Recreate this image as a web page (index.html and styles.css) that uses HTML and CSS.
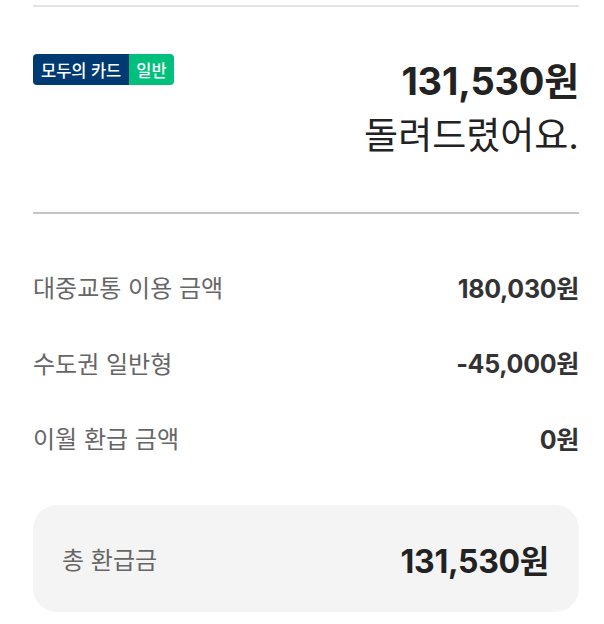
FILE: index.html
```html
<!DOCTYPE html>
<html lang="ko">
<head>
<meta charset="utf-8">
<link rel="stylesheet" href="styles.css">
</head>
<body>
<main class="page">
  <hr class="rule rule-top">
  <section class="summary">
    <div class="badge"><span class="badge-name">모두의 카드</span><span class="badge-type">일반</span></div>
    <div class="summary-text">
      <div class="summary-amount">131,530원</div>
      <div class="summary-msg">돌려드렸어요.</div>
    </div>
  </section>
  <hr class="rule rule-mid">
  <section class="rows">
    <div class="row"><span class="row-label">대중교통 이용 금액</span><span class="row-value">180,030원</span></div>
    <div class="row"><span class="row-label">수도권 일반형</span><span class="row-value">-45,000원</span></div>
    <div class="row"><span class="row-label">이월 환급 금액</span><span class="row-value">0원</span></div>
  </section>
  <section class="total">
    <span class="total-label">총 환급금</span>
    <span class="total-value">131,530원</span>
  </section>
</main>
</body>
</html>
```
FILE: styles.css
```css
* { box-sizing: border-box; }
html, body { margin: 0; background: #fff; }
body {
  font-family: "Inter", "Noto Sans CJK KR", sans-serif;
  color: #222;
}
.page {
  padding: 5px 25px 0 33px;
}
.rule {
  margin: 0;
  border: 0;
  height: 2px;
}
.rule-top { background: #e2e2e2; }
.rule-mid { background: #c4c4c4; }
.summary {
  display: flex;
  justify-content: space-between;
  align-items: flex-start;
  padding: 46px 0 52px;
}
.badge {
  display: flex;
  border-radius: 4px;
  overflow: hidden;
  height: 31px;
  font-size: 16.5px;
  font-weight: 500;
  color: #fff;
  margin-top: 1px;
}
.badge-name {
  background: #003a72;
  padding: 0 8px;
  display: flex;
  align-items: center;
}
.badge-type {
  background: #00c07c;
  padding: 0 7px;
  display: flex;
  align-items: center;
}
.summary-text {
  text-align: right;
  padding-top: 5px;
}
.summary-amount {
  font-size: 38px;
  font-weight: 700;
  line-height: 46px;
  color: #222;
  letter-spacing: -0.2px;
}
.summary-msg {
  font-size: 37px;
  font-weight: 400;
  line-height: 48px;
  color: #222;
  margin-top: 8px;
}
.rows {
  display: flex;
  flex-direction: column;
  padding-top: 55px;
  gap: 40.5px;
}
.row {
  display: flex;
  justify-content: space-between;
  align-items: center;
  height: 35px;
}
.row-label {
  font-size: 24px;
  color: #666;
}
.row-value {
  font-size: 25px;
  font-weight: 700;
  color: #333;
  letter-spacing: -0.3px;
}
.total {
  margin-top: 50px;
  height: 107px;
  background: #f4f4f4;
  border-radius: 24px;
  display: flex;
  justify-content: space-between;
  align-items: center;
  padding: 0 30px 0 29px;
}
.total-label {
  font-size: 24px;
  color: #666;
}
.total-value {
  font-size: 32px;
  font-weight: 700;
  color: #222;
  letter-spacing: -0.3px;
}
```
